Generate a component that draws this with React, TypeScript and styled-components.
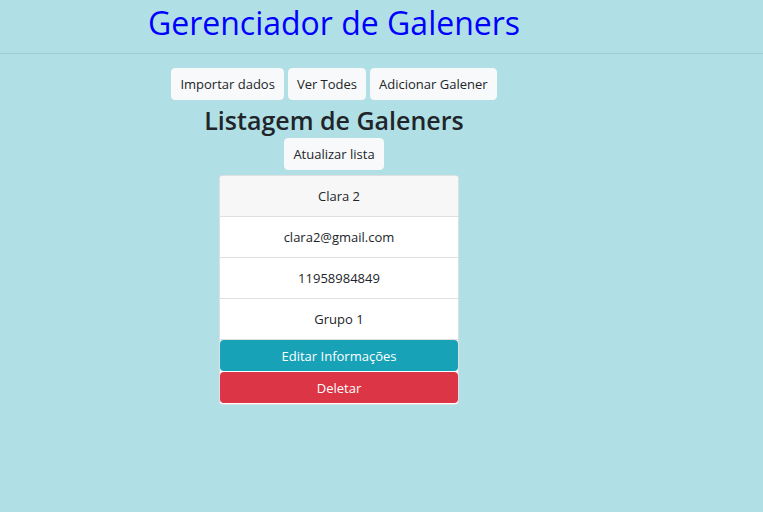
import React from 'react';
import styled, { createGlobalStyle } from 'styled-components';

const GlobalStyle = createGlobalStyle`
  html, body {
    margin: 0;
    padding: 0;
    background-color: #b0e0e6;
    font-family: "Open Sans", "Noto Sans", sans-serif;
    color: #212529;
  }
`;

const Page = styled.div`
  width: 763px;
  min-height: 512px;
  background-color: #b0e0e6;
`;

const HeaderBar = styled.header`
  border-bottom: 1px solid #9ccfd6;
`;

const HeaderInner = styled.div`
  width: 668px;
  height: 53px;
  display: flex;
  justify-content: center;
`;

const Title = styled.h1`
  margin: 0;
  padding-top: 1px;
  font-size: 32px;
  font-weight: 400;
  line-height: 44px;
  color: #0000ff;
`;

const Main = styled.main`
  width: 668px;
  display: flex;
  flex-direction: column;
  align-items: center;
  padding-top: 14px;
`;

const Toolbar = styled.div`
  display: flex;
  gap: 4px;
`;

const LightButton = styled.button`
  height: 32px;
  padding: 0 8px;
  border: 1px solid #f8f9fa;
  border-radius: 4px;
  background-color: #f8f9fa;
  color: #212529;
  font-family: inherit;
  font-size: 13px;
  cursor: pointer;
`;

const Subtitle = styled.h2`
  margin: 2px 0 0;
  font-size: 25px;
  font-weight: 600;
  line-height: 36px;
`;

const Card = styled.div`
  width: 238px;
  margin-top: 5px;
  margin-left: 10px;
  background-color: #fff;
  border: 1px solid rgba(0, 0, 0, 0.125);
  border-radius: 4px;
  overflow: hidden;
  display: flex;
  flex-direction: column;
`;

const Row = styled.div<{ $head?: boolean }>`
  height: 40px;
  display: flex;
  align-items: center;
  justify-content: center;
  font-size: 13px;
  background-color: ${(p) => (p.$head ? '#f7f7f7' : '#fff')};
  border-bottom: 1px solid #dfdfdf;
`;

const ActionButton = styled.button<{ $tone: 'info' | 'danger' }>`
  height: 31px;
  border: none;
  border-radius: 4px;
  color: #fff;
  font-family: inherit;
  font-size: 13px;
  background-color: ${(p) => (p.$tone === 'info' ? '#17a2b8' : '#dc3545')};
  margin-bottom: 1px;
  cursor: pointer;
`;

const galener = {
  nome: 'Clara 2',
  email: 'clara2@gmail.com',
  telefone: '11958984849',
  grupo: 'Grupo 1',
};

export default function App() {
  return (
    <Page>
      <GlobalStyle />
      <HeaderBar>
        <HeaderInner>
          <Title>Gerenciador de Galeners</Title>
        </HeaderInner>
      </HeaderBar>
      <Main>
        <Toolbar>
          <LightButton>Importar dados</LightButton>
          <LightButton>Ver Todes</LightButton>
          <LightButton>Adicionar Galener</LightButton>
        </Toolbar>
        <Subtitle>Listagem de Galeners</Subtitle>
        <LightButton>Atualizar lista</LightButton>
        <Card>
          <Row $head>{galener.nome}</Row>
          <Row>{galener.email}</Row>
          <Row>{galener.telefone}</Row>
          <Row>{galener.grupo}</Row>
          <ActionButton $tone="info">Editar Informações</ActionButton>
          <ActionButton $tone="danger">Deletar</ActionButton>
        </Card>
      </Main>
    </Page>
  );
}
